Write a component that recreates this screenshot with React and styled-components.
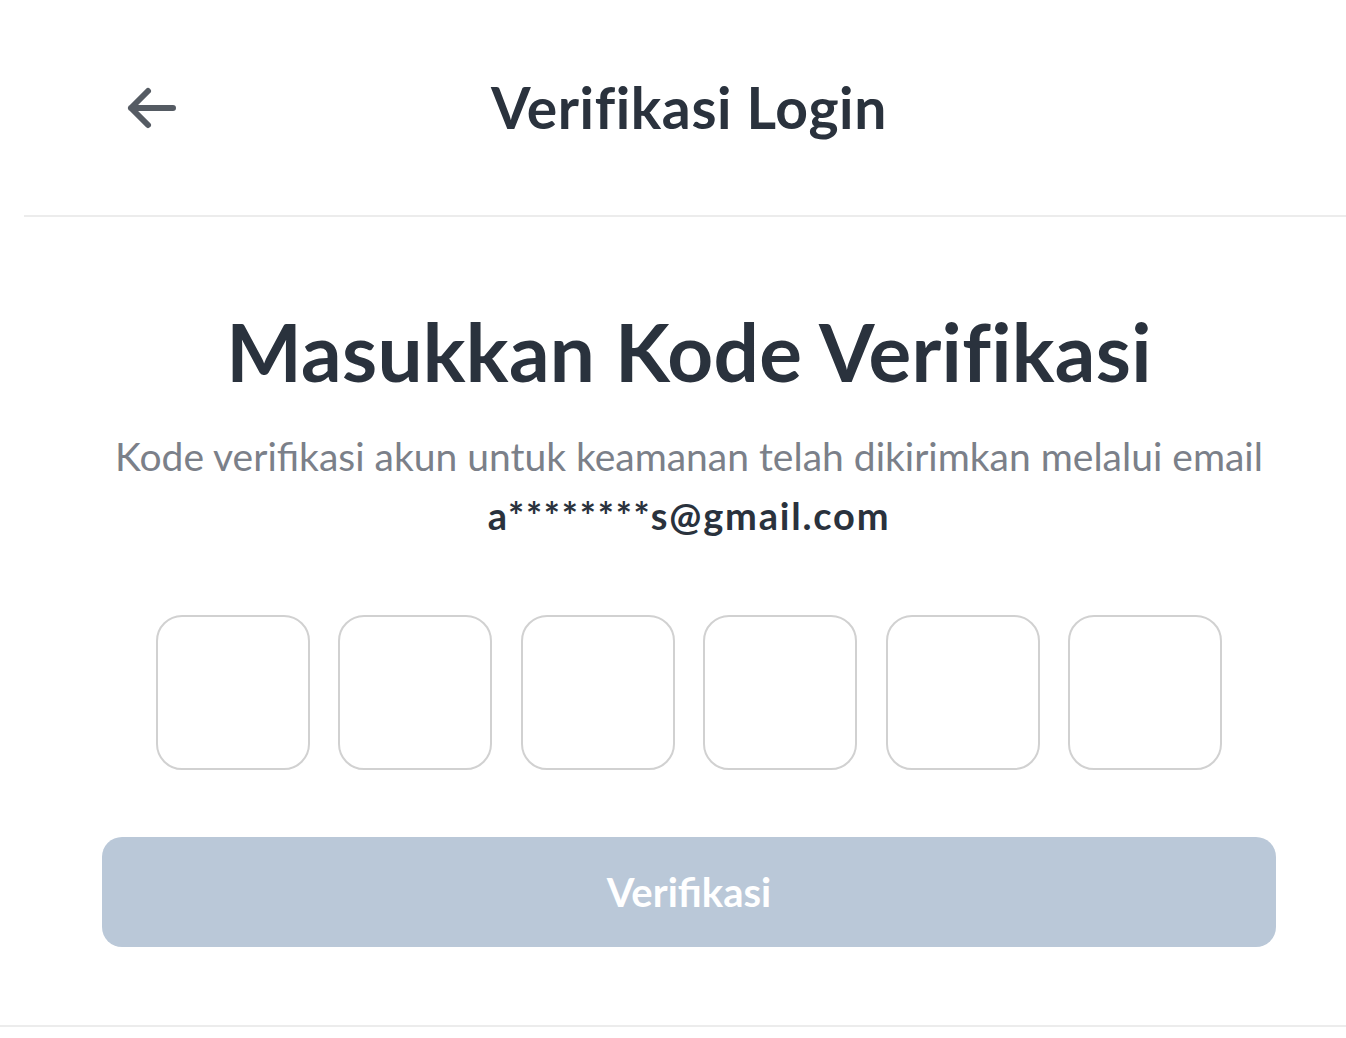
import React from "react";
import styled, { createGlobalStyle } from "styled-components";

const GlobalStyle = createGlobalStyle`
  html, body {
    margin: 0;
    padding: 0;
    background: #ffffff;
    overflow: hidden;
  }
  body {
    font-family: Lato, "Noto Sans", sans-serif;
    color: #2a323d;
  }
`;

const Page = styled.div`
  width: 1346px;
  height: 1038px;
  display: flex;
  flex-direction: column;
`;

const Frame = styled.div`
  margin-left: 24px;
  width: 1330px;
  display: flex;
  flex-direction: column;
`;

const Header = styled.header`
  height: 215px;
  display: grid;
  grid-template-columns: 1fr auto 1fr;
  align-items: center;
  border-bottom: 2px solid #ececec;
`;

const BackButton = styled.button`
  justify-self: start;
  margin-left: 100px;
  width: 56px;
  height: 56px;
  padding: 0;
  border: none;
  background: transparent;
  display: flex;
  align-items: center;
  justify-content: center;
  color: #555b63;
  cursor: pointer;
`;

const HeaderTitle = styled.h1`
  margin: 0 0 2px;
  font-size: 57px;
  font-weight: 700;
  color: #2a323d;
  letter-spacing: 0.6px;
`;

const Main = styled.main`
  display: flex;
  flex-direction: column;
  align-items: center;
  padding-top: 90px;
`;

const Title = styled.h2`
  margin: 0;
  font-size: 80px;
  line-height: 1.1;
  font-weight: 700;
  color: #2a323d;
  letter-spacing: 0.3px;
`;

const Subtitle = styled.p`
  margin: 38px 0 0;
  font-size: 39px;
  line-height: 1.2;
  color: #7b8089;
  text-align: center;
`;

const Email = styled.p`
  margin: 13px 0 0;
  font-size: 38px;
  line-height: 1.2;
  font-weight: 700;
  color: #2a323d;
  letter-spacing: 1.8px;
`;

const OtpRow = styled.div`
  margin-top: 77px;
  display: flex;
  gap: 28.5px;
`;

const OtpBox = styled.input`
  width: 154px;
  height: 155px;
  box-sizing: border-box;
  border: 2px solid #d1d1d1;
  border-radius: 26px;
  background: #fff;
  font-size: 56px;
  font-family: inherit;
  text-align: center;
  outline: none;
`;

const SubmitButton = styled.button`
  margin-top: 67px;
  width: 1174px;
  height: 110px;
  border: none;
  border-radius: 20px;
  background: #bac8d8;
  color: #ffffff;
  font-family: inherit;
  font-size: 40px;
  font-weight: 700;
  cursor: not-allowed;
`;

const Footer = styled.div`
  margin-top: auto;
  margin-bottom: 11px;
  border-top: 2px solid #ececec;
`;

function ArrowLeft() {
  return (
    <svg width="54" height="48" viewBox="0 0 54 48" fill="none">
      <path
        d="M48 24H6M23 7L6 24L23 41"
        stroke="currentColor"
        strokeWidth="6"
        strokeLinecap="round"
        strokeLinejoin="round"
      />
    </svg>
  );
}

export default function App() {
  return (
    <Page>
      <GlobalStyle />
      <Frame>
        <Header>
          <BackButton aria-label="Kembali">
            <ArrowLeft />
          </BackButton>
          <HeaderTitle>Verifikasi Login</HeaderTitle>
          <span />
        </Header>
        <Main>
          <Title>Masukkan Kode Verifikasi</Title>
          <Subtitle>Kode verifikasi akun untuk keamanan telah dikirimkan melalui email</Subtitle>
          <Email>a********s@gmail.com</Email>
          <OtpRow>
            {[0, 1, 2, 3, 4, 5].map((i) => (
              <OtpBox key={i} maxLength={1} inputMode="numeric" />
            ))}
          </OtpRow>
          <SubmitButton disabled>Verifikasi</SubmitButton>
        </Main>
      </Frame>
      <Footer />
    </Page>
  );
}
